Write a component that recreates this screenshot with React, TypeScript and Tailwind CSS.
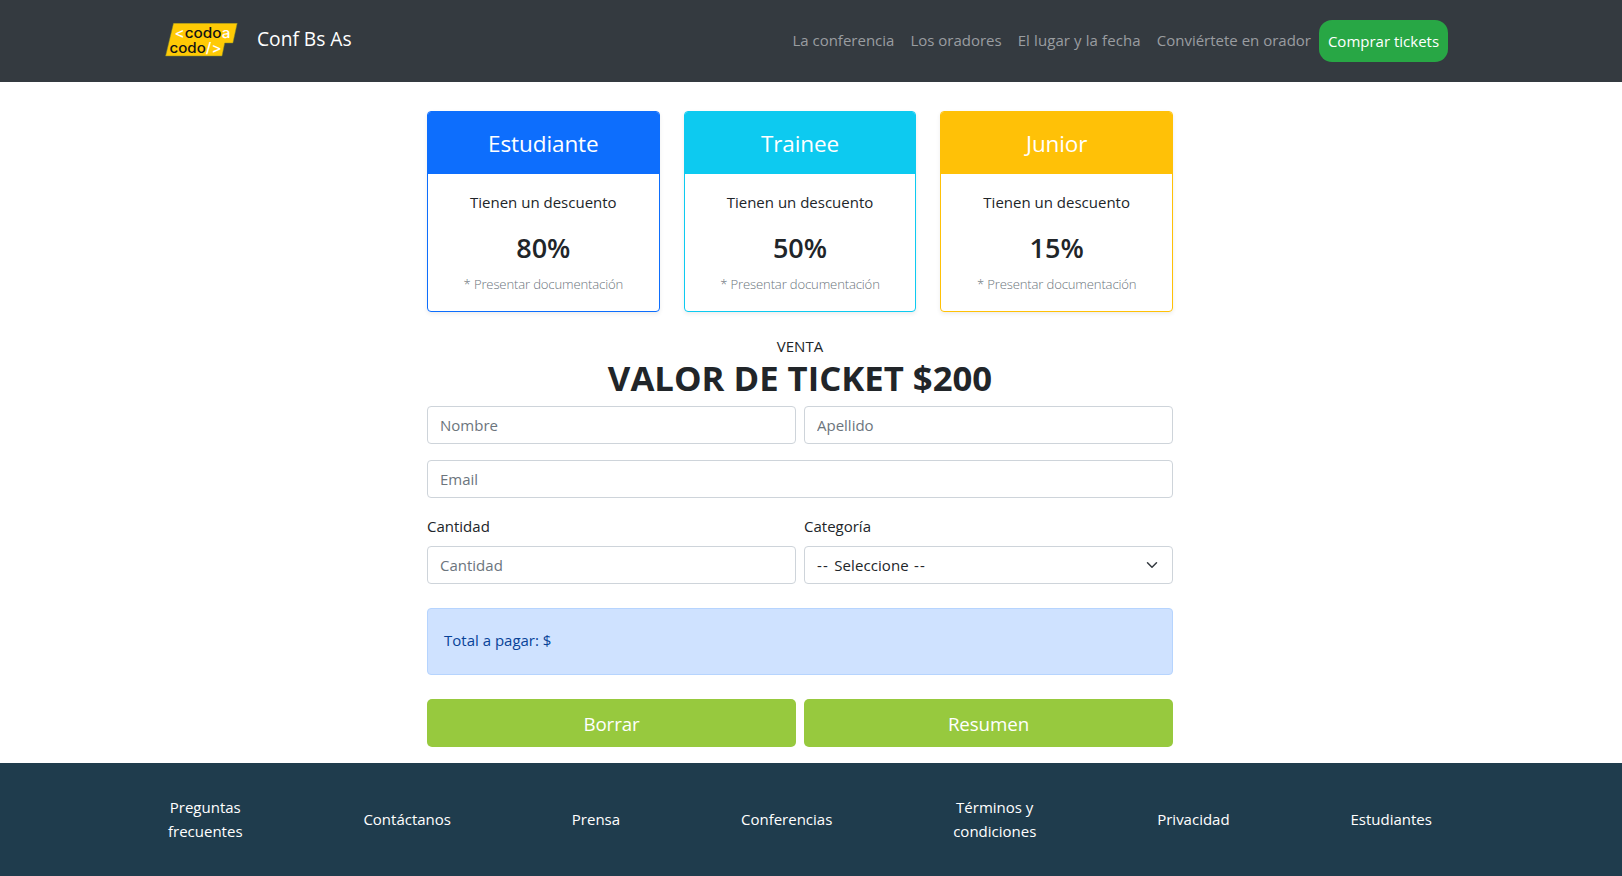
import { ReactNode } from "react";

const navLinks = [
  { label: "La conferencia", tracking: "" },
  { label: "Los oradores", tracking: "" },
  { label: "El lugar y la fecha", tracking: "tracking-[0.1px]" },
  { label: "Conviértete en orador", tracking: "" },
];

const discounts = [
  { name: "Estudiante", percent: "80%", border: "border-[#0d6efd]", header: "bg-[#0d6efd]" },
  { name: "Trainee", percent: "50%", border: "border-[#0dcaf0]", header: "bg-[#0dcaf0]" },
  { name: "Junior", percent: "15%", border: "border-[#ffc107]", header: "bg-[#ffc107]" },
];

const footerLinks: ReactNode[] = [
  <>Preguntas<br />frecuentes</>,
  "Contáctanos",
  "Prensa",
  "Conferencias",
  <>Términos y<br />condiciones</>,
  "Privacidad",
  "Estudiantes",
];

function Logo() {
  return (
    <svg className="h-9 w-[74px]" viewBox="0 0 74 36" fontFamily="Inter, sans-serif" fontWeight="500">
      <path d="M8.5 0.2H72.2L67.9 20H59.7L57 33H.6Z" fill="#ffca05" stroke="#7f8a2c" strokeWidth=".5" />
      <text x="9.5" y="15.2" fontSize="14.2" textLength="56" lengthAdjust="spacingAndGlyphs" fill="#141414">
        <tspan fill="#fff">&lt;</tspan>codo<tspan fill="#fff">a</tspan>
      </text>
      <text x="4.5" y="30.2" fontSize="14.2" textLength="52" lengthAdjust="spacingAndGlyphs" fill="#141414">
        codo<tspan fill="#fff">/&gt;</tspan>
      </text>
    </svg>
  );
}

function Field({ placeholder, className = "" }: { placeholder: string; className?: string }) {
  return (
    <input
      placeholder={placeholder}
      className={`block h-[38px] w-full rounded border border-[#ced4da] bg-white px-3 pb-px text-[15px] placeholder:text-[#6c757d] placeholder:opacity-100 ${className}`}
    />
  );
}

export default function App() {
  return (
    <div className="flex h-[876px] w-[1622px] flex-col overflow-hidden bg-white font-['Open_Sans',sans-serif] text-[15px] leading-6 text-[#212529]">
      <header className="flex h-[82px] items-center bg-[#343a40] pl-[165px] pr-[174px]">
        <Logo />
        <span className="ml-[18px] -mt-1 text-[19.2px] text-white">Conf Bs As</span>
        <nav className="ml-auto flex items-center">
          {navLinks.map(({ label, tracking }) => (
            <a key={label} className={`px-2 pb-0.5 text-[#9a9da0] ${tracking}`}>{label}</a>
          ))}
          <a className="flex h-[42px] w-[129px] items-center justify-center rounded-[13px] bg-[#28a745] pb-px text-white">
            Comprar tickets
          </a>
        </nav>
      </header>

      <main className="ml-[427px] w-[746px] flex-none pt-[29px]">
        <section className="grid grid-cols-3 gap-6 text-center">
          {discounts.map((d) => (
            <article
              key={d.name}
              className={`h-[201px] overflow-hidden rounded border shadow-[0_2px_4px_rgba(0,0,0,0.075)] ${d.border}`}
            >
              <h4 className={`flex h-[62px] items-center justify-center pt-0.5 text-[22.5px] tracking-[-0.1px] text-white ${d.header}`}>
                {d.name}
              </h4>
              <p className="mt-4">Tienen un descuento</p>
              <p className="mt-[17px] text-[27px] leading-[34px] font-semibold">{d.percent}</p>
              <p className="mt-[9px] text-[13.1px] leading-[21px] font-light tracking-[-0.15px] text-[#6c757d]">
                * Presentar documentación
              </p>
            </article>
          ))}
        </section>

        <section className="mt-[22px] h-[72px] text-center">
          <p>VENTA</p>
          <h2 className="text-[34.7px] leading-[40px] font-bold">VALOR DE TICKET $200</h2>
        </section>

        <form>
          <div className="grid grid-cols-2 gap-2">
            <Field placeholder="Nombre" />
            <Field placeholder="Apellido" />
          </div>
          <Field placeholder="Email" className="mt-4" />
          <div className="mt-4 grid grid-cols-2 gap-2">
            <div>
              <label className="mb-2 block">Cantidad</label>
              <Field placeholder="Cantidad" />
            </div>
            <div>
              <label className="mb-2 block">Categoría</label>
              <div className="flex h-[38px] items-center justify-between rounded border border-[#ced4da] pr-3 pl-3">
                <span className="tracking-[0.1px]">
                  <span className="tracking-[1.2px]">-- </span>Seleccione<span className="tracking-[1.2px]"> --</span>
                </span>
                <svg className="h-3 w-4" viewBox="0 0 16 16" fill="none">
                  <path d="M2 5l6 6 6-6" stroke="#343a40" strokeWidth="2" strokeLinecap="round" strokeLinejoin="round" />
                </svg>
              </div>
            </div>
          </div>
          <div className="mt-6 h-[67px] rounded border border-[#b6d4fe] bg-[#cfe2ff] px-4 pt-[19px] text-[#084298]">
            Total a pagar: $
          </div>
          <div className="mt-6 grid grid-cols-2 gap-2">
            <button type="button" className="h-12 rounded-[5px] bg-[#97c93e] pt-0.5 text-[18.75px] tracking-[-0.1px] text-white">Borrar</button>
            <button type="button" className="h-12 rounded-[5px] bg-[#97c93e] pt-0.5 text-[18.75px] tracking-[-0.1px] text-white">Resumen</button>
          </div>
        </form>
      </main>

      <footer className="mt-4 flex h-[113px] items-center justify-between bg-[#1f3c4d] pr-[190px] pb-0.5 pl-[168px] text-center text-white">
        {footerLinks.map((label, i) => (
          <a key={i}>{label}</a>
        ))}
      </footer>
    </div>
  );
}
